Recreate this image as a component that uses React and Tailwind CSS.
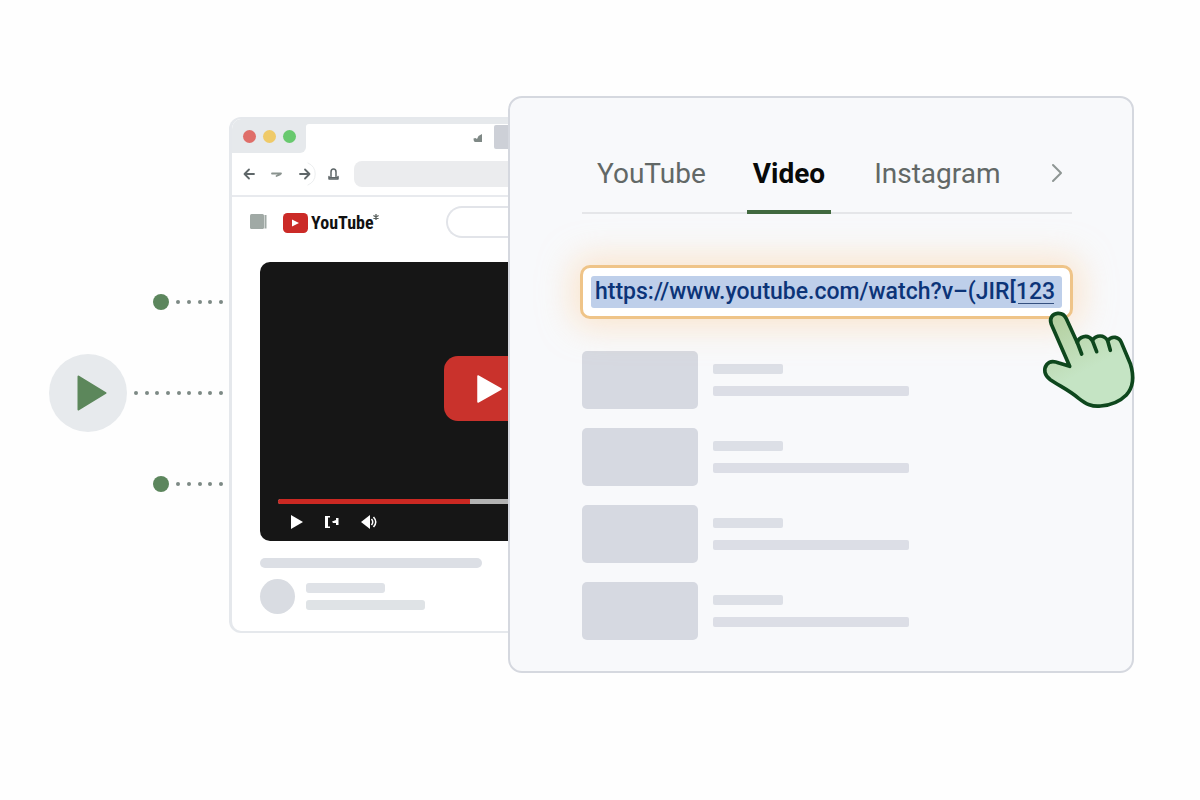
import clsx from 'clsx';

const TABS = ['YouTube', 'Video', 'Instagram'];
const RESULTS = [1, 2, 3, 4];

function Dots({ count, className }) {
  return (
    <div className={clsx('flex items-center justify-between', className)}>
      {Array.from({ length: count }, (_, i) => (
        <span key={i} className="size-1 rounded-full bg-[#7d8985]" />
      ))}
    </div>
  );
}

function Connectors() {
  return (
    <div className="flex flex-col items-end gap-11 pt-[198px] pr-1.5">
      <div className="flex items-center gap-[7px]">
        <span className="size-4 rounded-full bg-[#5c865d]" />
        <Dots count={5} className="w-[47px]" />
      </div>
      <div className="flex items-center gap-[7px]">
        <div className="flex size-[78px] items-center justify-center rounded-full bg-[#e7eaed]">
          <svg viewBox="0 0 30 36" className="ml-2 h-9 w-[30px]">
            <path d="M1.5 1.5 28.5 18 1.5 34.5Z" fill="#5c875b" stroke="#5c875b" strokeWidth="2" strokeLinejoin="round" />
          </svg>
        </div>
        <Dots count={9} className="w-[89px]" />
      </div>
      <div className="flex items-center gap-[7px]">
        <span className="size-4 rounded-full bg-[#5c865d]" />
        <Dots count={5} className="w-[47px]" />
      </div>
    </div>
  );
}

function NavButton({ label, className, children }) {
  return (
    <button type="button" aria-label={label} className={className}>
      <svg viewBox="0 0 12 12" className="size-3 overflow-visible" fill="none" stroke="#5f6769" strokeWidth="1.8" strokeLinecap="round" strokeLinejoin="round">
        {children}
      </svg>
    </button>
  );
}

function VideoPlayer() {
  return (
    <div className="flex h-[279px] flex-col rounded-l-[10px] bg-[#161616] pl-[18px] pt-[94px]">
      <button
        type="button"
        aria-label="Play video"
        className="flex h-[65px] w-16 items-center self-end rounded-l-[14px] bg-[#c9322c] pl-[33px]"
      >
        <svg viewBox="0 0 25 30" className="h-[30px] w-[25px]">
          <path d="M1 2 24 15 1 28Z" fill="#fff" stroke="#fff" strokeWidth="1.5" strokeLinejoin="round" />
        </svg>
      </button>
      <div className="mt-[78px] flex h-[5px] overflow-hidden rounded-l-full bg-[#b3b3b3]">
        <div className="w-5/6 bg-[#cb2822]" />
      </div>
      <div className="mt-2.5 flex items-center gap-5 pl-3">
        <button type="button" aria-label="Play">
          <svg viewBox="0 0 14 16" className="h-4 w-3.5" fill="#fff">
            <path d="M1 1 13 8 1 15Z" />
          </svg>
        </button>
        <button type="button" aria-label="Next">
          <svg viewBox="0 0 16 16" className="size-4" fill="#fff">
            <path d="M1 2h5v1.500H4v9h2V14H1ZM8 7.500 12 6V4h2.500v7H12V9H9Z" />
          </svg>
        </button>
        <button type="button" aria-label="Volume">
          <svg viewBox="0 0 18 16" className="h-4 w-[18px]">
            <path d="M1 8 10 1v14Z" fill="#fff" />
            <path d="M11.500 5q2.500 3 0 6M13.500 3q4.500 5 0 10" fill="none" stroke="#fff" strokeWidth="1.5" />
          </svg>
        </button>
      </div>
    </div>
  );
}

function BrowserWindow() {
  return (
    <section className="mt-[21px] min-w-0 overflow-hidden rounded-l-xl border-y-2 border-l-3 border-[#e5e8ec] bg-white">
      <div className="flex h-[34px] bg-[#e6e9ec]">
        <div className="flex w-[74px] shrink-0 bg-white">
          <div className="flex w-full items-center gap-[7px] rounded-br-md bg-[#e6e9ec] pl-[11px]">
            <span className="size-[13px] rounded-full bg-[#df6e69]" />
            <span className="size-[13px] rounded-full bg-[#efca68]" />
            <span className="size-[13px] rounded-full bg-[#68c96e]" />
          </div>
        </div>
        <div className="mt-[5px] flex flex-1 items-start justify-end gap-[11px] rounded-tl-[3px] bg-white">
          <svg viewBox="0 0 10 9" className="mt-2.5 h-[9px] w-2.5" fill="#7f8986">
            <path d="M.5 4.500 2.500 4 4 5 5.500 2 9 0V8H2.500Q.5 8 .5 4.500Z" />
          </svg>
          <span className="mt-px h-6 w-3.5 rounded-l-[2px] bg-[#cdd0d7]" />
        </div>
      </div>

      <div className="flex h-11 items-center gap-4 border-b-2 border-[#e8eaee] pl-[11px]">
        <NavButton label="Back">
          <path d="M11 6H1.500M6 1.500 1.500 6 6 10.500" />
        </NavButton>
        <NavButton label="History">
          <path d="M1 5.500h9M5.500 8 9 6.500" stroke="#8a938f" />
        </NavButton>
        <NavButton label="Forward">
          <path d="M1 6h9.500M6 1.500 10.500 6 6 10.500" />
          <path d="M9-5a12 12 0 0 1 0 22" stroke="#eceeef" strokeWidth="1" />
        </NavButton>
        <NavButton label="Site security">
          <path d="M4 8.500V4a2.500 3 0 0 1 5 0v4.500M2 8.500v2.500h9V8.500" strokeWidth="1.500" />
          <path d="M2.500 9.800h8" strokeWidth="1.500" />
        </NavButton>
        <div className="-ml-px h-[26px] flex-1 rounded-l-lg bg-[#ebecee]" />
      </div>

      <div className="flex h-[65px] items-start pl-[18px]">
        <svg viewBox="0 0 18 16" className="mt-[17px] h-4 w-[18px] shrink-0" fill="#a0a9a5">
          <rect x="0" y="0" width="14" height="15" rx="1.5" />
          <path d="M14.500 1h2v13.500h-2z" />
        </svg>
        <a href="#youtube" className="mt-3.5 ml-[15px] flex h-6 items-center gap-[3px]">
          <svg viewBox="0 0 25 20" className="h-5 w-[25px]">
            <rect width="25" height="20" rx="4.500" fill="#cb2a27" />
            <path d="m9 6.500 7 3.500-7 3.500Z" fill="#fff" />
          </svg>
          <span className="font-['Roboto_Condensed','Open_Sans_Condensed','Noto_Sans_Condensed','Liberation_Sans',sans-serif] text-[18px] leading-6 font-bold text-[#111]">
            YouTube
          </span>
          <svg viewBox="0 0 6 6" className="-ml-1 mb-3 size-1.5" stroke="#59605d" strokeWidth="1.3">
            <path d="M3 0v6M.4 1.500l5.200 3M5.600 1.500l-5.200 3" />
          </svg>
        </a>
        <div className="mt-[9px] ml-auto h-8 w-[62px] rounded-l-full border-2 border-r-0 border-[#e2e4e9]" />
      </div>

      <div className="pl-7">
        <VideoPlayer />
        <div className="mt-[17px] mr-[26px] h-2.5 rounded-full bg-[#dcdfe5]" />
        <div className="mt-[11px] mb-[17px] flex items-center gap-[11px]">
          <span className="size-[35px] rounded-full bg-[#d9dce2]" />
          <div className="flex flex-col gap-[7px]">
            <span className="h-2.5 w-[79px] rounded-[3px] bg-[#dfe2e7]" />
            <span className="h-2.5 w-[119px] rounded-[3px] bg-[#dfe3e6]" />
          </div>
        </div>
      </div>
    </section>
  );
}

function HandCursor() {
  return (
    <svg
      viewBox="0 0 390 390"
      className="pointer-events-none absolute top-[22px] right-[-80px] z-10 size-[130px]"
      fill="none"
      stroke="#0e471d"
      strokeWidth="11"
      strokeLinecap="round"
      strokeLinejoin="round"
    >
      <defs>
        <linearGradient id="handFill" x1="0.2" y1="0" x2="0.5" y2="0.6">
          <stop offset="0" stopColor="#b4cf9f" />
          <stop offset="1" stopColor="#c5e4c4" />
        </linearGradient>
      </defs>
      <path
        d="M149 229 94 103C87 85 97 71 113 70C126 69 134 75 139 86L172 158C176 141 202 130 217 151C229 134 252 133 263 152C276 136 297 140 304 157L331 221C345 266 339 293 319 315C298 336 270 346 242 348C216 351 199 343 176 325C150 302 119 288 91 269C73 256 70 238 80 224C88 213 103 213 117 219Z"
        fill="url(#handFill)"
      />
      <path d="m172 158 13 34M217 151l13 34M263 152l8 29" />
    </svg>
  );
}

function UrlField() {
  return (
    <div className="relative mt-[51px] -ml-0.5 -mr-px rounded-[10px] border-3 border-[#efc488] bg-white p-2 shadow-[0_0_32px_8px_rgba(253,214,170,0.55)]">
      <input
        type="text"
        aria-label="Video URL"
        defaultValue="https://www.youtube.com/watch?v–(JIR[123"
        className="block h-8 w-full rounded-[3px] bg-[#becfea] px-1 text-[23px] leading-8 font-medium text-[#0c3478] outline-none"
      />
      <span className="absolute right-4 bottom-3 h-px w-9 bg-[#34507f]" />
      <HandCursor />
    </div>
  );
}

function SearchPanel() {
  return (
    <section className="min-w-0 rounded-[14px] border-2 border-[#d5d8df] bg-[#f8f9fb] pt-10 pr-[60px] pb-[31px] pl-[72px]">
      <div role="tablist" className="flex h-[76px] items-stretch border-b-2 border-[#e5e6e9] pl-[9px]">
        {TABS.map((tab) => (
          <button
            key={tab}
            type="button"
            role="tab"
            aria-selected={tab === 'Video'}
            className={clsx(
              '-mb-0.5 border-b-4 px-1.5 text-[28px] leading-9',
              tab === 'Video'
                ? 'mr-[37px] ml-[35px] border-[#41693f] font-bold text-[#080a09]'
                : 'border-transparent text-[#626866]'
            )}
          >
            {tab}
          </button>
        ))}
        <button type="button" aria-label="More tabs" className="mr-2 ml-auto">
          <svg viewBox="0 0 14 22" className="mb-1 h-[22px] w-3.5" fill="none" stroke="#8e9693" strokeWidth="2" strokeLinecap="round" strokeLinejoin="round">
            <path d="m3 3 8 8-8 8" />
          </svg>
        </button>
      </div>

      <UrlField />

      <ul className="mt-8 flex flex-col gap-[19px]">
        {RESULTS.map((id) => (
          <li key={id} className="flex items-center gap-[15px]">
            <span className="h-[58px] w-[116px] rounded-[5px] bg-[#d6d9e1]" />
            <div className="flex flex-col gap-3">
              <span className="h-2.5 w-[70px] rounded-[2px] bg-[#dcdfe6]" />
              <span className="h-2.5 w-[196px] rounded-[2px] bg-[#dcdee6]" />
            </div>
          </li>
        ))}
      </ul>
    </section>
  );
}

export default function App() {
  return (
    <main className="grid min-h-screen grid-cols-[180px_279fr_626fr] items-start bg-[#fefefe] pt-24 pr-[66px] pb-8 pl-[49px] font-['Roboto',sans-serif]">
      <Connectors />
      <BrowserWindow />
      <SearchPanel />
    </main>
  );
}
